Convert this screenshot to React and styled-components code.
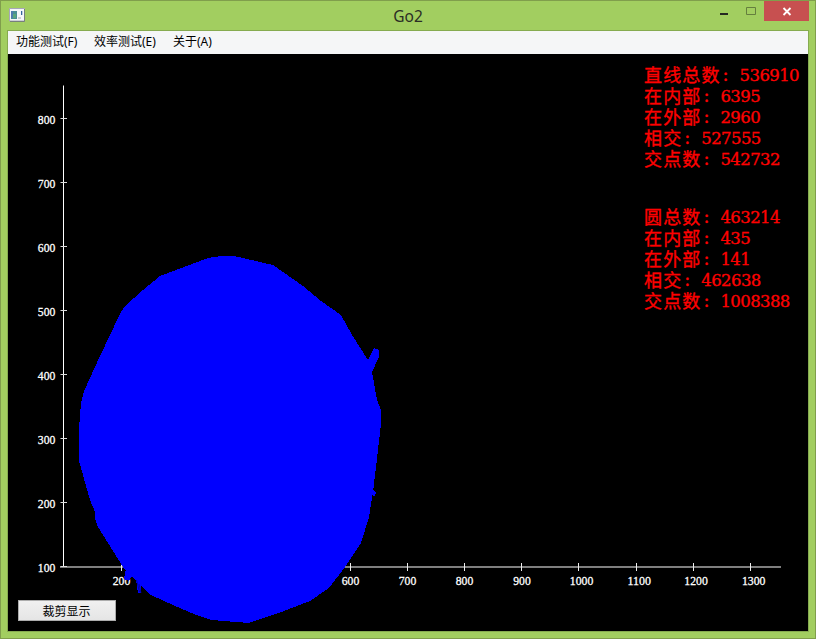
import React from "react";
import styled, { createGlobalStyle } from "styled-components";

const Global = createGlobalStyle`
  body { margin: 0; overflow: hidden; }
`;

const cjk = `"Noto Sans CJK SC", sans-serif`;

const Window = styled.div`
  box-sizing: border-box;
  width: 816px;
  height: 639px;
  display: flex;
  flex-direction: column;
  padding: 0 6px 6px;
  border: 1px solid #809e4c;
  background: #a2ce60;
`;

const TitleBar = styled.header`
  height: 29px;
  flex: none;
  display: grid;
  grid-template-columns: 92px 1fr 92px;
`;

const AppIcon = styled.svg`
  display: block;
  margin: 7px 0 0 2px;
`;

const Title = styled.h1`
  margin: 0;
  text-align: center;
  font: 400 15.5px/30px "Noto Sans", sans-serif;
  color: #2b2d25;
`;

const Controls = styled.div`
  display: flex;
  justify-content: flex-end;
`;

const ControlButton = styled.button`
  width: ${(p) => p.$width}px;
  height: 20px;
  flex: none;
  padding: 0;
  border: 0;
  background: ${(p) => (p.$close ? "#c75050" : "transparent")};
  svg { display: block; }
`;

const Client = styled.main`
  box-sizing: border-box;
  width: 802px;
  height: 602px;
  flex: none;
  display: flex;
  flex-direction: column;
  border: 1px solid #86ab50;
  background: #000;
`;

const MenuBar = styled.nav`
  height: 23px;
  flex: none;
  display: flex;
  gap: 16px;
  padding-left: 8px;
  background: #f5f6f7;
`;

const MenuItem = styled.span`
  width: ${(p) => p.$width}px;
  white-space: nowrap;
  font: 400 12px/22px "Noto Sans", ${cjk};
  color: #000;
`;

const Canvas = styled.section`
  position: relative;
  flex: 1;
  display: flex;
  flex-direction: column;
  justify-content: space-between;
`;

const Plot = styled.svg`
  position: absolute;
  inset: 0;
  text {
    font: 400 13px "Liberation Serif", serif;
    fill: #fff;
    stroke: #fff;
    stroke-width: 0.3px;
  }
`;

const Stats = styled.aside`
  position: relative;
  align-self: flex-end;
  display: flex;
  flex-direction: column;
  gap: 37px;
  width: 164px;
  padding-top: 10px;
`;

const StatRow = styled.div`
  display: flex;
  height: 21px;
  white-space: nowrap;
  color: #f00;
  -webkit-text-stroke: 0.35px #f00;
`;

const StatName = styled.span`
  font: 400 18px/21px ${cjk};
  letter-spacing: 1.15px;
`;

const Colon = styled.span`
  width: 17px;
  padding-left: 2px;
  font: 400 18px/21px "DejaVu Serif", serif;
`;

const StatValue = styled.span`
  font: 400 16.5px/24px "DejaVu Serif", serif;
  letter-spacing: -0.6px;
`;

const ClipButton = styled.button`
  position: relative;
  box-sizing: border-box;
  width: 98px;
  height: 21px;
  margin: 0 0 10px 10px;
  padding: 0 1px 1px 0;
  border: 1px solid #acacac;
  background: linear-gradient(#f0f0f0, #e5e5e5);
  font: 400 12px/17px ${cjk};
  color: #000;
`;

const menus = [
  ["功能测试(F)", 62],
  ["效率测试(E)", 63],
  ["关于(A)", 42],
];

const groups = [
  [["直线总数", "536910"], ["在内部", "6395"], ["在外部", "2960"], ["相交", "527555"], ["交点数", "542732"]],
  [["圆总数", "463214"], ["在内部", "435"], ["在外部", "141"], ["相交", "462638"], ["交点数", "1008388"]],
];

const yTicks = [
  [800, 118], [700, 182], [600, 246], [500, 310],
  [400, 374], [300, 438], [200, 502], [100, 566],
];

const xTicks = [
  [200, 121, 121.5], [600, 350, 350.5], [700, 407, 407.5], [800, 464, 464.5], [900, 521, 522],
  [1000, 578, 581.5], [1100, 636, 639.2], [1200, 693, 696], [1300, 750, 753.7],
];

function Chart() {
  return (
    <Plot width="800" height="577" viewBox="8 54 800 577">
      <path d="M63.5 85.5V567" stroke="#fff" />
      <path d="M60 567H781" stroke="#a8a8a8" strokeWidth="1.6" />
      {yTicks.map(([v, y]) => (
        <g key={v}>
          <path d={`M60.5 ${y + 0.5}H67`} stroke="#ddd" />
          <text x="37.8" y={y + 6} textLength="17.5" lengthAdjust="spacingAndGlyphs">{v}</text>
        </g>
      ))}
      {xTicks.map(([v, x, label]) => (
        <g key={v}>
          <path d={`M${x + 0.5} 563V571`} stroke="#eee" />
          <text x={label} y="585.4" textAnchor="middle" textLength={v < 1000 ? 17.5 : 23.5} lengthAdjust="spacingAndGlyphs">{v}</text>
        </g>
      ))}
      <g fill="#00f" shapeRendering="crispEdges">
        <path d="M124 307L143 290L160 276L208 258L221 256H234L273 265L303 286L321 301L341 315L352 335L368 360L374 348L379 350V357L372 372L377 400L381 410V424L376 467L373 492L369 517L361 543L345 567L329 588L310 601L284 611L249 623L212 620L196 615L173 605L151 595L140 585L130 575L123 567L98 527L95 518V512L90 500L79 461V428L81 403L84 391L100 356L119 316Z" />
        <path d="M126 568L133 574L129 581L124 579ZM136 579L141 585V593H138ZM373 490L376 493L374 497L372 494Z" />
      </g>
      <path d="M136.5 580L139.5 592M139 584L141 593" stroke="#000090" strokeWidth=".8" />
    </Plot>
  );
}

export default function App() {
  return (
    <Window>
      <Global />
      <TitleBar>
        <AppIcon width="17" height="15" viewBox="0 0 17 15">
          <path d="M.5 .5H15.5V13H.5Z" fill="#f6f7fa" stroke="#a7a7b8" />
          <path d="M1 13.5H15.5V1" fill="none" stroke="#77807d" />
          <path d="M2 3H8V11H2Z" fill="#4b8f95" />
          <path d="M2 3H4V10H2Z" fill="#507bb0" />
          <path d="M4 6H7V10H4Z" fill="#5ba67d" />
          <path d="M9 9H12V11H9Z" fill="#ccced3" />
          <path d="M12 3H13.3V7H12Z" fill="#35669c" />
        </AppIcon>
        <Title>Go2</Title>
        <Controls>
          <ControlButton $width={27} aria-label="Minimize">
            <svg width="27" height="20"><path d="M10 12H18V14H10Z" fill="#252822" /></svg>
          </ControlButton>
          <ControlButton $width={27} aria-label="Maximize">
            <svg width="27" height="20"><path d="M9.5 6.5H18.5V13.5H9.5Z" fill="none" stroke="#657f3e" /></svg>
          </ControlButton>
          <ControlButton $width={45} $close aria-label="Close">
            <svg width="45" height="20"><path d="M19.5 7L26.5 14M26.5 7L19.5 14" stroke="#fff" strokeWidth="1.8" /></svg>
          </ControlButton>
        </Controls>
      </TitleBar>
      <Client>
        <MenuBar>
          {menus.map(([label, width]) => <MenuItem key={label} $width={width}>{label}</MenuItem>)}
        </MenuBar>
        <Canvas>
          <Chart />
          <Stats>
            {groups.map((rows, i) => (
              <div key={i}>
                {rows.map(([name, value]) => (
                  <StatRow key={name}>
                    <StatName>{name}</StatName>
                    <Colon>:</Colon>
                    <StatValue>{value}</StatValue>
                  </StatRow>
                ))}
              </div>
            ))}
          </Stats>
          <ClipButton>裁剪显示</ClipButton>
        </Canvas>
      </Client>
    </Window>
  );
}
